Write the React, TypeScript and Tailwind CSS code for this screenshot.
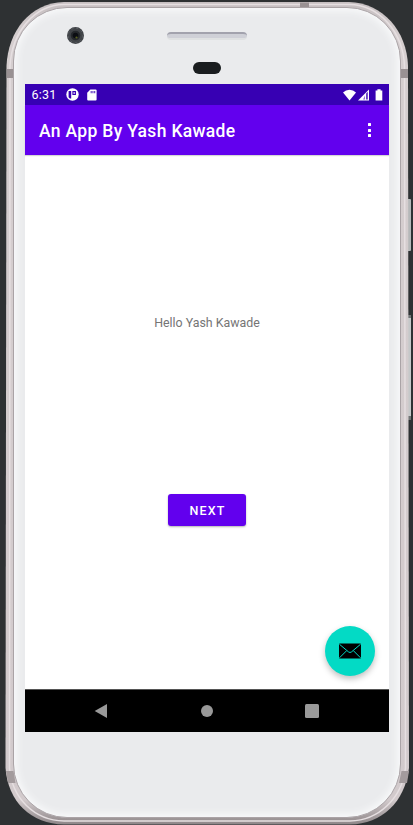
import React from "react";

function StatusBar() {
  return (
    <div className="flex h-[21px] shrink-0 items-center bg-[#3700b3] pl-[7px] pr-[6px] text-white">
      <span className="w-[34px] text-[12.5px] leading-[21px] tracking-[0.2px]">6:31</span>
      <svg width="13" height="13" viewBox="0 0 13 13">
        <circle cx="6.5" cy="6.5" r="6.2" fill="#fff" />
        <path d="M2.600 3h2.600v7.400H3.900L2.600 9.200z" fill="#3700b3" />
        <path d="M6.900 3.600h2.500v2.800H6.900z" fill="none" stroke="#3700b3" strokeWidth="1.100" />
      </svg>
      <svg className="ml-[8px]" width="10" height="12" viewBox="0 0 10 12">
        <path d="M3.400.5h5.200q1 0 1 1v9q0 1-1 1H1.200q-1 0-1-1V3.800z" fill="#fff" />
        <path d="M3.700 2h.9v2.200h-.9zM5.500 2h.9v2.200h-.9zM7.300 2h.9v2.200h-.9z" fill="#3700b3" />
      </svg>
      <div className="ml-auto flex items-center">
        <svg width="13" height="12" viewBox="0 0 13 12">
          <path d="M0 3.400Q2.800.7 6.500.7T13 3.400L6.500 11.600z" fill="#fff" />
        </svg>
        <svg className="ml-[2px]" width="11" height="12" viewBox="0 0 11 12">
          <path d="M11 .5v11H0z" fill="#fff" />
          <path d="M8 4.600l1.900-1.900v7.700H8z" fill="#3700b3" opacity=".75" />
          <path d="M7 6.500v3.900H5z" fill="#3700b3" opacity=".55" />
        </svg>
        <svg className="ml-[6px]" width="8" height="12" viewBox="0 0 8 12">
          <path d="M2.400.3h3.200v1.200h1.700v10H.6v-10h1.800z" fill="#fff" />
        </svg>
      </div>
    </div>
  );
}

function AppBar() {
  return (
    <header className="flex h-[50px] shrink-0 items-center justify-between bg-[#6200ee] pl-[14.5px] pr-[18px] text-white shadow-[0_1px_1px_rgba(0,0,0,0.16)]">
      <h1 className="text-[17.5px] font-medium leading-[24px] tracking-[0.32px] pt-[2px]">An App By Yash Kawade</h1>
      <div className="flex flex-col gap-[2.5px]">
        <i className="size-[3px] rounded-[0.5px] bg-white" />
        <i className="size-[3px] rounded-[0.5px] bg-white" />
        <i className="size-[3px] rounded-[0.5px] bg-white" />
      </div>
    </header>
  );
}

function MailButton() {
  return (
    <button className="mt-[99.5px] mr-[14px] flex size-[50px] items-center justify-center self-end rounded-full bg-[#03dac5] shadow-[0_3px_6px_rgba(0,0,0,0.25)]">
      <svg width="22" height="16" viewBox="0 0 22 16">
        <rect y=".5" width="22" height="15" rx=".8" fill="#000" />
        <path d="M.5 1.300l9 7.600q1.500 1.200 3 0l9-7.600M.5 14.800l7-7M21.500 14.800l-7-7" fill="none" stroke="#03dac5" strokeWidth="1" />
      </svg>
    </button>
  );
}

function NavigationBar() {
  return (
    <nav className="flex h-[43px] shrink-0 items-center border-t border-[#555] bg-black pl-[69px]">
      <svg width="14" height="16" viewBox="0 0 14 16">
        <path d="M.7 8L13 .9v14.200z" fill="#999" />
      </svg>
      <i className="ml-[93px] size-[12px] rounded-full bg-[#999]" />
      <i className="ml-[92px] size-[14px] rounded-[1.5px] bg-[#999]" />
    </nav>
  );
}

function Screen() {
  return (
    <div className="mx-auto flex h-[648px] w-[364px] flex-col bg-white">
      <StatusBar />
      <AppBar />
      <main className="flex flex-1 flex-col items-center">
        <p className="mt-[160px] pl-px text-[12.4px] leading-[16px] text-[#757575]">Hello Yash Kawade</p>
        <button className="mt-[163px] h-[32px] w-[78px] rounded-[3px] bg-[#6200ee] pl-[2px] pt-px text-[12.5px] font-medium leading-[31px] tracking-[1.1px] text-white shadow-[0_1px_2px_rgba(0,0,0,0.3)]">
          NEXT
        </button>
        <MailButton />
      </main>
      <NavigationBar />
    </div>
  );
}

/* Metal rim, with its edge highlights and antenna bands. */
function Rim() {
  return (
    <svg className="absolute inset-0" width="413" height="825" viewBox="0 0 413 825">
      <defs>
        <linearGradient id="rim" x1="0" x2="0" y1="0" y2="1">
          <stop offset="0" stopColor="#c6bfc1" />
          <stop offset=".04" stopColor="#d5cecf" />
          <stop offset=".97" stopColor="#d2cacc" />
          <stop offset="1" stopColor="#8d8587" />
        </linearGradient>
      </defs>
      <rect x="407" y="199" width="4" height="52" rx="1" fill="#b5b8b9" />
      <rect x="407" y="315" width="4" height="105" rx="1" fill="#c5c8c9" />
      <path d="M408 315h3v3h-3zM408 416h3v4h-3z" fill="#707475" />
      <path
        d="M64 2H349C383 3 407 31 408 66L409 768C405 802 382 824 350 824.5H64C31 824 8 802 5.500 768L6.500 66C8 31 30 3 64 2z"
        fill="url(#rim)"
      />
      <path
        d="M64 4.500H349C380 5 403 32 404.500 66L405.500 768C402 798 379 820.500 350 821H64C34 820.500 12 798 9.500 768L10 66C12 32 34 5 64 4.500z"
        fill="none"
        stroke="#e6dfe1"
        strokeWidth="1.500"
      />
      <path d="M6.700 69h7v9h-7zM401 69h7v9h-7zM300 2.500h9v4.500h-9z" fill="#999193" />
      <path d="M6 771h7.500l2 12H8zM401.500 771h7.500l-2 12h-8z" fill="#a39b9d" />
    </svg>
  );
}

export default function App() {
  return (
    <div
      className="relative h-[825px] w-[413px] overflow-hidden bg-[#2e3133] pt-[7px] pl-[13px]"
      style={{ fontFamily: 'Roboto, "Liberation Sans", sans-serif' }}
    >
      <Rim />
      <div className="relative h-[811px] w-[388px] rounded-[54px] border border-[#aaa3a6] bg-[#eaebed] shadow-[inset_0_0_7px_3px_#f8f9fa]">
        <div className="flex h-[76px] flex-col items-center">
          <div className="mt-[24px] h-[8px] w-[80px] rounded-[4px] border-t-2 border-b-2 border-t-[#a2a2ad] border-b-[#dfe1e2] bg-[#cfd0d7]" />
          <div className="mt-[22px] h-[12px] w-[28px] rounded-full bg-[#1a1d1f]" />
        </div>
        <svg className="absolute top-[18px] left-[52px]" width="19" height="19" viewBox="0 0 19 19">
          <circle cx="9.500" cy="9.500" r="8.500" fill="#414448" />
          <circle cx="9.500" cy="9.500" r="7.300" fill="none" stroke="#5c6065" strokeWidth="1" strokeDasharray="2 3" />
          <circle cx="9.500" cy="9.500" r="4.800" fill="#24272b" />
          <circle cx="9.500" cy="9.500" r="2.800" fill="#0b0d12" />
          <circle cx="10.500" cy="11.500" r="1.100" fill="#59601f" />
        </svg>
        <div className="-ml-[1px]">
          <Screen />
        </div>
      </div>
    </div>
  );
}
